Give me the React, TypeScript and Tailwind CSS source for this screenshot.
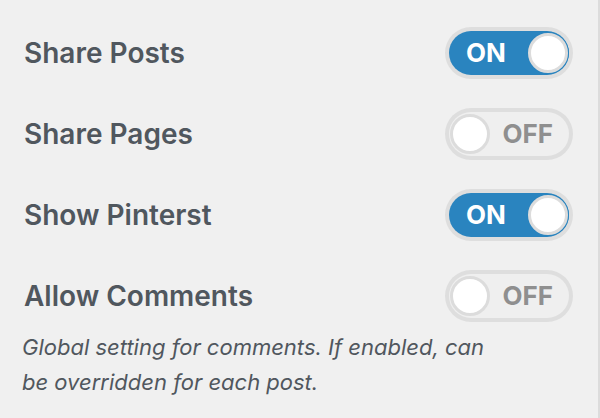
import { useState } from 'react';

interface ToggleProps {
  on: boolean;
  onChange: (v: boolean) => void;
}

const Toggle = ({ on, onChange }: ToggleProps) => {
  return (
    <button
      type="button"
      onClick={() => onChange(!on)}
      className="w-[128px] h-[52px] rounded-full bg-[#dedede] p-[4px] shrink-0"
    >
      <div
        className={
          on
            ? 'w-full h-full rounded-full bg-[#2a84bf] flex items-center justify-between pl-[17px] pr-[1px]'
            : 'w-full h-full rounded-full bg-[#efefef] flex items-center justify-between pl-[1px] pr-[16px]'
        }
      >
        {on ? (
          <>
            <span className="text-white font-bold text-[26px] leading-none">ON</span>
            <span className="w-[40px] h-[40px] rounded-full bg-white border-[3px] border-[#dcdcdc] ring-1 ring-[#2a84bf]" />
          </>
        ) : (
          <>
            <span className="w-[40px] h-[40px] rounded-full bg-white border-[3px] border-[#dcdcdc]" />
            <span className="text-[#8f8f8f] font-bold text-[26px] leading-none">OFF</span>
          </>
        )}
      </div>
    </button>
  );
};

const App = () => {
  const [settings, setSettings] = useState([
    { label: 'Share Posts', on: true },
    { label: 'Share Pages', on: false },
    { label: 'Show Pinterst', on: true },
    { label: 'Allow Comments', on: false },
  ]);

  const toggle = (i: number, v: boolean) => {
    setSettings(s => s.map((item, idx) => (idx === i ? { ...item, on: v } : item)));
  };

  return (
    <div className="w-[600px] h-[418px] bg-[#f0f0f0] border-r-2 border-[#dcdcdc] font-['Inter',sans-serif] text-[#50575e] overflow-hidden">
      <div className="pt-[27px] pl-[24px] pr-[25px] flex flex-col gap-[29px]">
        {settings.map((s, i) => (
          <div key={s.label} className="flex items-center justify-between h-[52px]">
            <span className="text-[28px] font-semibold">{s.label}</span>
            <Toggle on={s.on} onChange={v => toggle(i, v)} />
          </div>
        ))}
      </div>
      <p className="mt-[8px] pl-[22px] pr-[100px] italic text-[22px] leading-[35px]">
        Global setting for comments. If enabled, can be overridden for each post.
      </p>
    </div>
  );
};

export default App;
